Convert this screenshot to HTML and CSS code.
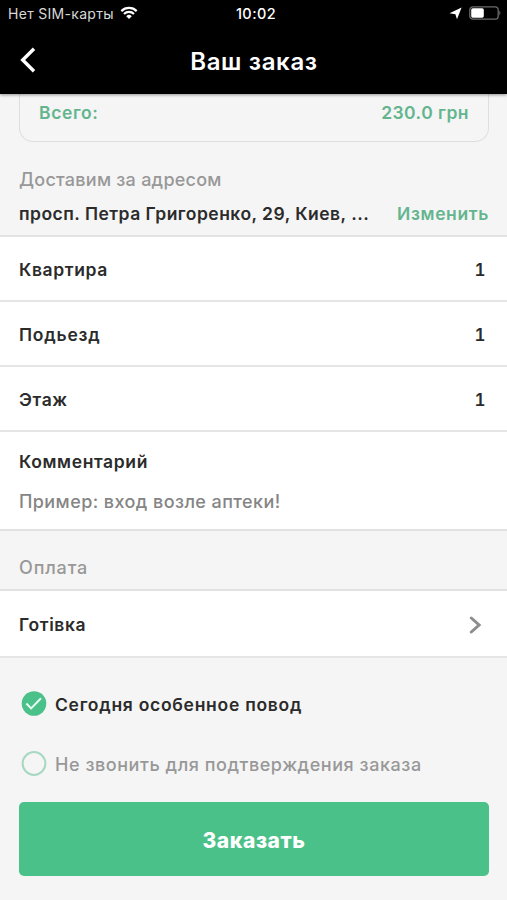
FILE: index.html
```html
<!DOCTYPE html>
<html lang="ru">
<head>
<meta charset="utf-8">
<title>Ваш заказ</title>
<link rel="stylesheet" href="styles.css">
</head>
<body>
<header class="header">
  <div class="status">
    <div class="carrier"><span class="carrier-name">Нет SIM-карты</span>
      <svg class="wifi" width="18" height="14" viewBox="0 0 18 14" fill="none" stroke="#fff" stroke-width="2.2"><path d="M1.3 5.1a11 11 0 0 1 15.4 0M4 8a7 7 0 0 1 10 0"/><path d="M6.2 10.2a4 4 0 0 1 5.6 0L9 13z" fill="#fff" stroke="none"/></svg>
    </div>
    <time class="clock">10:02</time>
    <div class="indicators">
      <svg width="13" height="13" viewBox="0 0 13 13" fill="#fff"><path d="M12.6.4 8 12.3 6.4 7.2.5 6.2z"/></svg>
      <svg width="32" height="14" viewBox="0 0 32 14"><rect x=".8" y=".8" width="28.4" height="12.4" rx="3.2" fill="none" stroke="#6b6b6b" stroke-width="1.3"/><rect x="2.2" y="2.3" width="12.6" height="9.4" rx="1.6" fill="#fff"/><path d="M30.4 4.6q2 2.4 0 4.8z" fill="#777"/></svg>
    </div>
  </div>
  <nav class="nav">
    <svg class="back" width="16" height="26" viewBox="0 0 16 26" fill="none" stroke="#fff" stroke-width="3.4"><path d="M14 1.8 2.7 13 14 24.2"/></svg>
    <h1 class="title">Ваш заказ</h1>
  </nav>
</header>
<main>
  <section class="total"><span class="total-label">Всего:</span><span class="total-sum">230.0 грн</span></section>
  <section class="address">
    <h2 class="caption address-caption">Доставим за адресом</h2>
    <div class="address-line"><span class="address-text">просп. Петра Григоренко, 29, Киев, ...</span><a class="change">Изменить</a></div>
  </section>
  <section class="fields">
    <div class="row"><span class="apartment">Квартира</span><span class="value">1</span></div>
    <div class="row"><span class="entrance">Подьезд</span><span class="value">1</span></div>
    <div class="row"><span class="floor">Этаж</span><span class="value">1</span></div>
    <div class="comment"><span class="comment-label">Комментарий</span><span class="hint">Пример: вход возле аптеки!</span></div>
  </section>
  <h2 class="caption payment">Оплата</h2>
  <div class="row method"><span class="cash">Готівка</span>
    <svg class="chevron" width="13" height="18" viewBox="0 0 13 18" fill="none" stroke="#8d8d8d" stroke-width="3" stroke-linecap="round"><path d="m2.3 2 7.8 7-7.8 7"/></svg>
  </div>
  <section class="options">
    <div class="option"><svg width="26" height="26" viewBox="0 0 26 26"><circle cx="13" cy="12.5" r="12.3" fill="#4bc18a"/><path d="m5.4 12.5 4.7 4.9L20 7.3" fill="none" stroke="#e8fff4" stroke-width="2"/></svg><span class="occasion">Сегодня особенное повод</span></div>
    <div class="option off"><svg width="26" height="26" viewBox="0 0 26 26"><circle cx="13" cy="12.5" r="11.4" fill="none" stroke="#a7d8c2" stroke-width="2"/></svg><span class="nocall">Не звонить для подтверждения заказа</span></div>
  </section>
  <button class="order"><span class="order-text">Заказать</span></button>
</main>
</body>
</html>
```
FILE: styles.css
```css
* { box-sizing: border-box; }
body {
  margin: 0;
  height: 900px;
  overflow: hidden;
  background: #f5f5f5;
  color: #2b2b2b;
  font: 560 17.5px/24px Inter, "Noto Sans", sans-serif;
  letter-spacing: .62px;
}
h1, h2 { margin: 0; font: inherit; }
svg { display: block; flex: none; }
span { white-space: nowrap; }
.header {
  height: 94px;
  background: #000;
  color: #fff;
  box-shadow: 0 1px 3px rgba(0, 0, 0, .4);
  position: relative;
}
.status {
  display: grid;
  grid-template-columns: 1fr auto 1fr;
  align-items: center;
  height: 28px;
  padding: 0 7px 0 8px;
  font-size: 14px;
  font-weight: 400;
  line-height: 18px;
}
.carrier, .indicators { display: flex; align-items: center; }
.carrier { gap: 6px; }
.carrier-name { color: #d8d8d8; letter-spacing: .3px; }
.wifi { margin-top: -2px; }
.clock { font-weight: 500; font-size: 14.5px; letter-spacing: .4px; margin-left: 4px; }
.indicators { justify-content: flex-end; gap: 7px; margin: -2px -1px 0 0; }
.nav {
  display: grid;
  grid-template-columns: 40px 1fr 40px;
  align-items: center;
  height: 66px;
  padding: 0 20px;
}
.back { margin-top: -3px; }
.title { text-align: center; font-size: 24px; font-weight: 600; line-height: 30px; letter-spacing: .65px; padding: 1px 0 0 1px; }
.total {
  display: flex;
  justify-content: space-between;
  height: 48px;
  margin: 0 18px 0 19px;
  padding: 7px 19px 0;
  border: 1px solid #dedede;
  border-top: 0;
  border-radius: 0 0 14px 14px;
  color: #64b58f;
}
.total-sum { letter-spacing: .45px; }
.address { height: 95px; padding: 26px 18px 0 19px; border-bottom: 2px solid #e1e4e3; }
.caption { color: #989898; font-size: 18px; font-weight: 500; }
.address-caption { letter-spacing: .25px; }
.address-text { letter-spacing: .48px; }
.address-line { display: flex; justify-content: space-between; margin-top: 10px; }
.change { color: #64b58f; }
.fields, .method { background: #fff; }
.row {
  display: flex;
  align-items: center;
  justify-content: space-between;
  height: 65px;
  padding: 2px 21px 0 19px;
  border-bottom: 2px solid #e5e5e5;
}
.entrance { letter-spacing: .78px; }
.value { font-size: 17px; font-weight: 600; font-feature-settings: "tnum"; }
.comment { height: 99px; padding: 18px 19px 0; border-bottom: 2px solid #e1e1e1; display: flex; flex-direction: column; gap: 16px; }
.hint { color: #858585; font-size: 18px; font-weight: 500; letter-spacing: .42px; }
.payment { height: 60px; padding: 25px 19px 0; border-bottom: 2px solid #e1e1e1; letter-spacing: .85px; }
.method { height: 67px; padding-top: 3px; padding-right: 25px; }
.options { display: flex; flex-direction: column; gap: 34px; padding: 33px 21px 25px; }
.option { display: flex; align-items: center; gap: 8px; height: 26px; }
.option span { padding-top: 2px; }
.occasion { letter-spacing: .72px; }
.nocall { font-size: 18px; font-weight: 500; letter-spacing: .55px; }
.off { color: #989898; }
.order {
  display: block;
  width: 470px;
  height: 74px;
  margin: 0 0 0 19px;
  padding: 3px 0 0;
  border: 0;
  border-radius: 5px;
  background: #4bc18a;
  color: #fff;
  font: 800 21px/24px Inter, sans-serif;
  letter-spacing: .6px;
}
```
